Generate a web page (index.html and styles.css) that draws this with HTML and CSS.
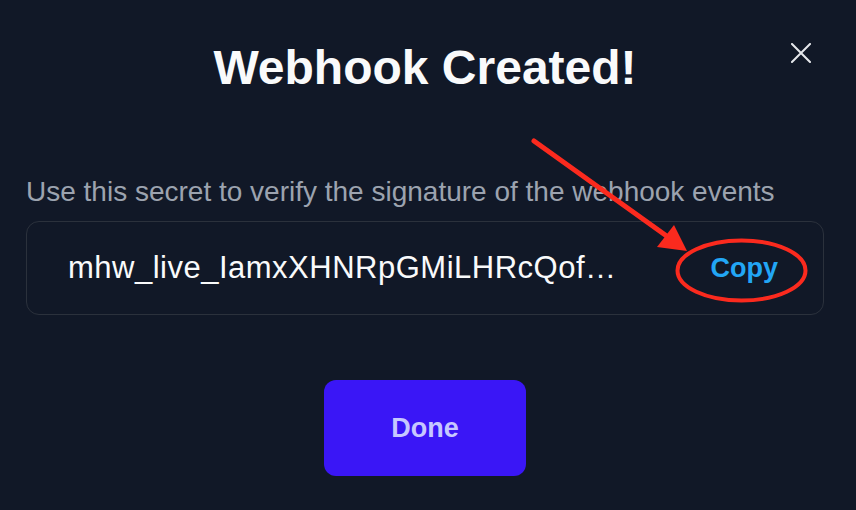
FILE: index.html
```html
<!DOCTYPE html>
<html lang="en">
<head>
<meta charset="utf-8">
<title>Webhook Created</title>
<link rel="stylesheet" href="styles.css">
</head>
<body>
<div class="modal">
  <button class="close" aria-label="Close">
    <svg width="20" height="20" viewBox="0 0 20 20"><path d="M1 1 L19 19 M19 1 L1 19" stroke="#e5e7eb" stroke-width="2" stroke-linecap="square"/></svg>
  </button>
  <h1 class="title">Webhook Created!</h1>
  <p class="hint">Use this secret to verify the signature of the webhook events</p>
  <div class="secret">
    <span class="secret-text">mhw_live_IamxXHNRpGMiLHRcQof…</span>
    <button class="copy">Copy</button>
  </div>
  <div class="actions">
    <button class="done">Done</button>
  </div>
  <svg class="annotation" width="856" height="510" viewBox="0 0 856 510">
    <line x1="534" y1="141" x2="668" y2="237" stroke="#fb2a1e" stroke-width="5" stroke-linecap="round"/>
    <polygon points="687,251 657,247 674,225" fill="#fb2a1e"/>
    <ellipse cx="741.5" cy="270.5" rx="64" ry="30" fill="none" stroke="#fb2a1e" stroke-width="4"/>
  </svg>
</div>
</body>
</html>
```

FILE: styles.css
```css
* { box-sizing: border-box; }
html, body {
  margin: 0;
  padding: 0;
  background: #111827;
}
body {
  width: 856px;
  height: 510px;
  overflow: hidden;
  font-family: "Liberation Sans", Arial, Helvetica, sans-serif;
}
.modal {
  position: relative;
  width: 856px;
  height: 510px;
  padding: 44px 32px 0 26px;
  display: flex;
  flex-direction: column;
}
.close {
  position: absolute;
  top: 43px;
  right: 45px;
  width: 20px;
  height: 20px;
  padding: 0;
  border: 0;
  background: transparent;
  line-height: 0;
}
.title {
  margin: 0;
  font-size: 48px;
  line-height: 47px;
  font-weight: 700;
  color: #f9fafb;
  text-align: center;
}
.hint {
  margin: 87px 0 0 0;
  font-size: 28px;
  line-height: 28px;
  color: #9ca3af;
  white-space: nowrap;
}
.secret {
  margin-top: 15px;
  height: 94px;
  border: 1px solid #2b313c;
  border-radius: 13px;
  display: flex;
  align-items: center;
  justify-content: space-between;
  padding: 0 45px 0 41px;
}
.secret-text {
  font-size: 31px;
  line-height: 28px;
  letter-spacing: 0.5px;
  color: #f9fafb;
  white-space: nowrap;
}
.copy {
  border: 0;
  background: transparent;
  padding: 0;
  font-family: inherit;
  font-size: 27px;
  line-height: 26px;
  font-weight: 700;
  color: #22a6f5;
}
.actions {
  margin-top: 65px;
  display: flex;
  justify-content: center;
}
.done {
  width: 202px;
  height: 96px;
  border: 0;
  border-radius: 12px;
  background: #3a16f6;
  color: #c6c8ff;
  font-family: inherit;
  font-size: 27px;
  font-weight: 700;
}
.annotation {
  position: absolute;
  left: 0;
  top: 0;
  pointer-events: none;
}
```
